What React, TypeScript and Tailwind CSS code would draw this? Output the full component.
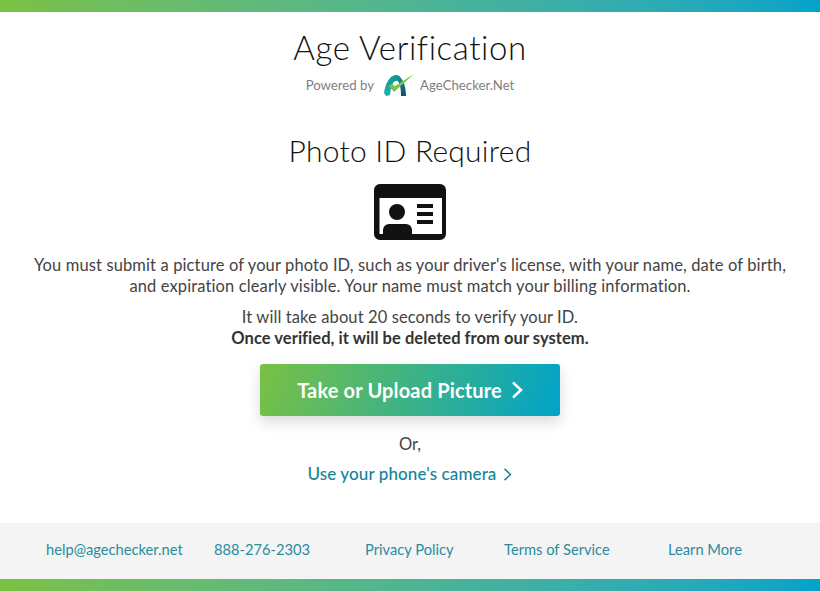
import React from 'react';

const font = { fontFamily: 'Lato' };

function Chevron({ className, weight = 2 }: { className: string; weight?: number }) {
  return (
    <svg viewBox="0 0 12 18" fill="none" stroke="currentColor" strokeWidth={weight} className={className}>
      <path d="M2 1.5 L10 9 L2 16.5" />
    </svg>
  );
}

function IdCard() {
  return (
    <svg viewBox="0 0 72 56" width="72" height="56" className="block">
      <path
        fillRule="evenodd"
        fill="#111111"
        d="M6 0 H66 A6 6 0 0 1 72 6 V50 A6 6 0 0 1 66 56 H6 A6 6 0 0 1 0 50 V6 A6 6 0 0 1 6 0 Z M5.5 14 V50 H68 V14 Z"
      />
      <circle cx="23" cy="28" r="8" fill="#111111" />
      <path d="M9 50 V46 A6 6 0 0 1 15 40 H32 A6 6 0 0 1 38 46 V50 Z" fill="#111111" />
      <rect x="43" y="20" width="16" height="4" fill="#111111" />
      <rect x="43" y="28" width="16" height="4" fill="#111111" />
      <rect x="43" y="36" width="16" height="4" fill="#111111" />
    </svg>
  );
}

function Logo() {
  return (
    <svg viewBox="0 0 32 24" width="32" height="24" className="block">
      <defs>
        <linearGradient id="leftLeg" x1="0" y1="1" x2="1" y2="0">
          <stop offset="0" stopColor="#1db5ad" />
          <stop offset="1" stopColor="#0f8f8f" />
        </linearGradient>
        <linearGradient id="rightLeg" x1="0" y1="0" x2="0" y2="1">
          <stop offset="0" stopColor="#128a8f" />
          <stop offset="1" stopColor="#0b4f6c" />
        </linearGradient>
      </defs>
      <path d="M1 20 C2 11 7 2 13 2 C15 2 17 3 18 5 L14 8 C10 7 8 13 7 22 L3 23 Z" fill="url(#leftLeg)" />
      <path d="M14 7 L18 5 C21 9 23 15 23 23 L18 23 C18 15 17 10 14 7 Z" fill="url(#rightLeg)" />
      <path d="M6 13 L11 19 L31 1 L12 13 L9 11 Z" fill="#7cc24b" />
    </svg>
  );
}

export default function App() {
  const links = [
    { label: 'help@agechecker.net', cls: 'w-[214px] pl-[46px]' },
    { label: '888-276-2303', cls: 'w-[151px]' },
    { label: 'Privacy Policy', cls: 'w-[139px]' },
    { label: 'Terms of Service', cls: 'w-[164px]' },
    { label: 'Learn More', cls: 'w-[100px]' },
  ];

  return (
    <div className="w-[820px] h-[591px] bg-white flex flex-col overflow-hidden" style={font}>
      <div className="h-3 bg-gradient-to-r from-[#7ac143] to-[#00a3c9]" />

      <div className="flex-1 flex flex-col items-center text-center">
        <h1 className="mt-[15px] text-[33px] leading-[40px] text-[#111111] font-light tracking-[0.6px]">Age Verification</h1>
        <div className="mt-[6px] flex items-center text-[13.2px] leading-6 text-[#808080]">
          <span>Powered by</span>
          <span className="ml-[9px] mr-[5px]"><Logo /></span>
          <span>AgeChecker.Net</span>
        </div>

        <h2 className="mt-[33px] text-[30px] leading-[40px] text-[#111111] font-light tracking-[0.25px]">Photo ID Required</h2>
        <div className="mt-[14px]"><IdCard /></div>

        <p className="mt-[15px] w-[800px] text-[16.5px] leading-[21px] tracking-[0.12px] text-[#444444]">
          You must submit a picture of your photo ID, such as your driver's license, with your name, date of birth,
          <br />
          and expiration clearly visible. Your name must match your billing information.
        </p>
        <p className="mt-[10px] text-[16.5px] leading-[21px] tracking-[0.1px] text-[#444444]">It will take about 20 seconds to verify your ID.</p>
        <p className="text-[16.5px] leading-[21px] tracking-[0.05px] font-bold text-[#333333]">Once verified, it will be deleted from our system.</p>

        <button className="mt-[15px] w-[300px] h-[52px] rounded-[3px] bg-[linear-gradient(110deg,#7ac143,#00a3c9)] text-white text-[20px] tracking-[0.15px] font-bold flex items-center justify-center gap-[9px] shadow-[0_6px_14px_rgba(0,0,0,0.15)]">
          Take or Upload Picture
          <Chevron className="w-[12px] h-[18px]" weight={2.5} />
        </button>

        <div className="mt-[18px] text-[16.5px] leading-[21px] text-[#444444]">Or,</div>
        <a className="mt-[8px] flex items-center gap-[7px] text-[17px] leading-[22px] tracking-[0.1px] font-medium text-[#13849b]">
          Use your phone's camera
          <Chevron className="w-[9px] h-[15px]" />
        </a>
      </div>

      <div className="h-[56px] pb-[3px] bg-[#f4f4f4] flex items-center text-[14.7px] text-[#2a8c9e]">
        {links.map((l) => (
          <a key={l.label} className={l.cls}>{l.label}</a>
        ))}
      </div>
      <div className="h-3 bg-gradient-to-r from-[#7ac143] to-[#00a3c9]" />
    </div>
  );
}
